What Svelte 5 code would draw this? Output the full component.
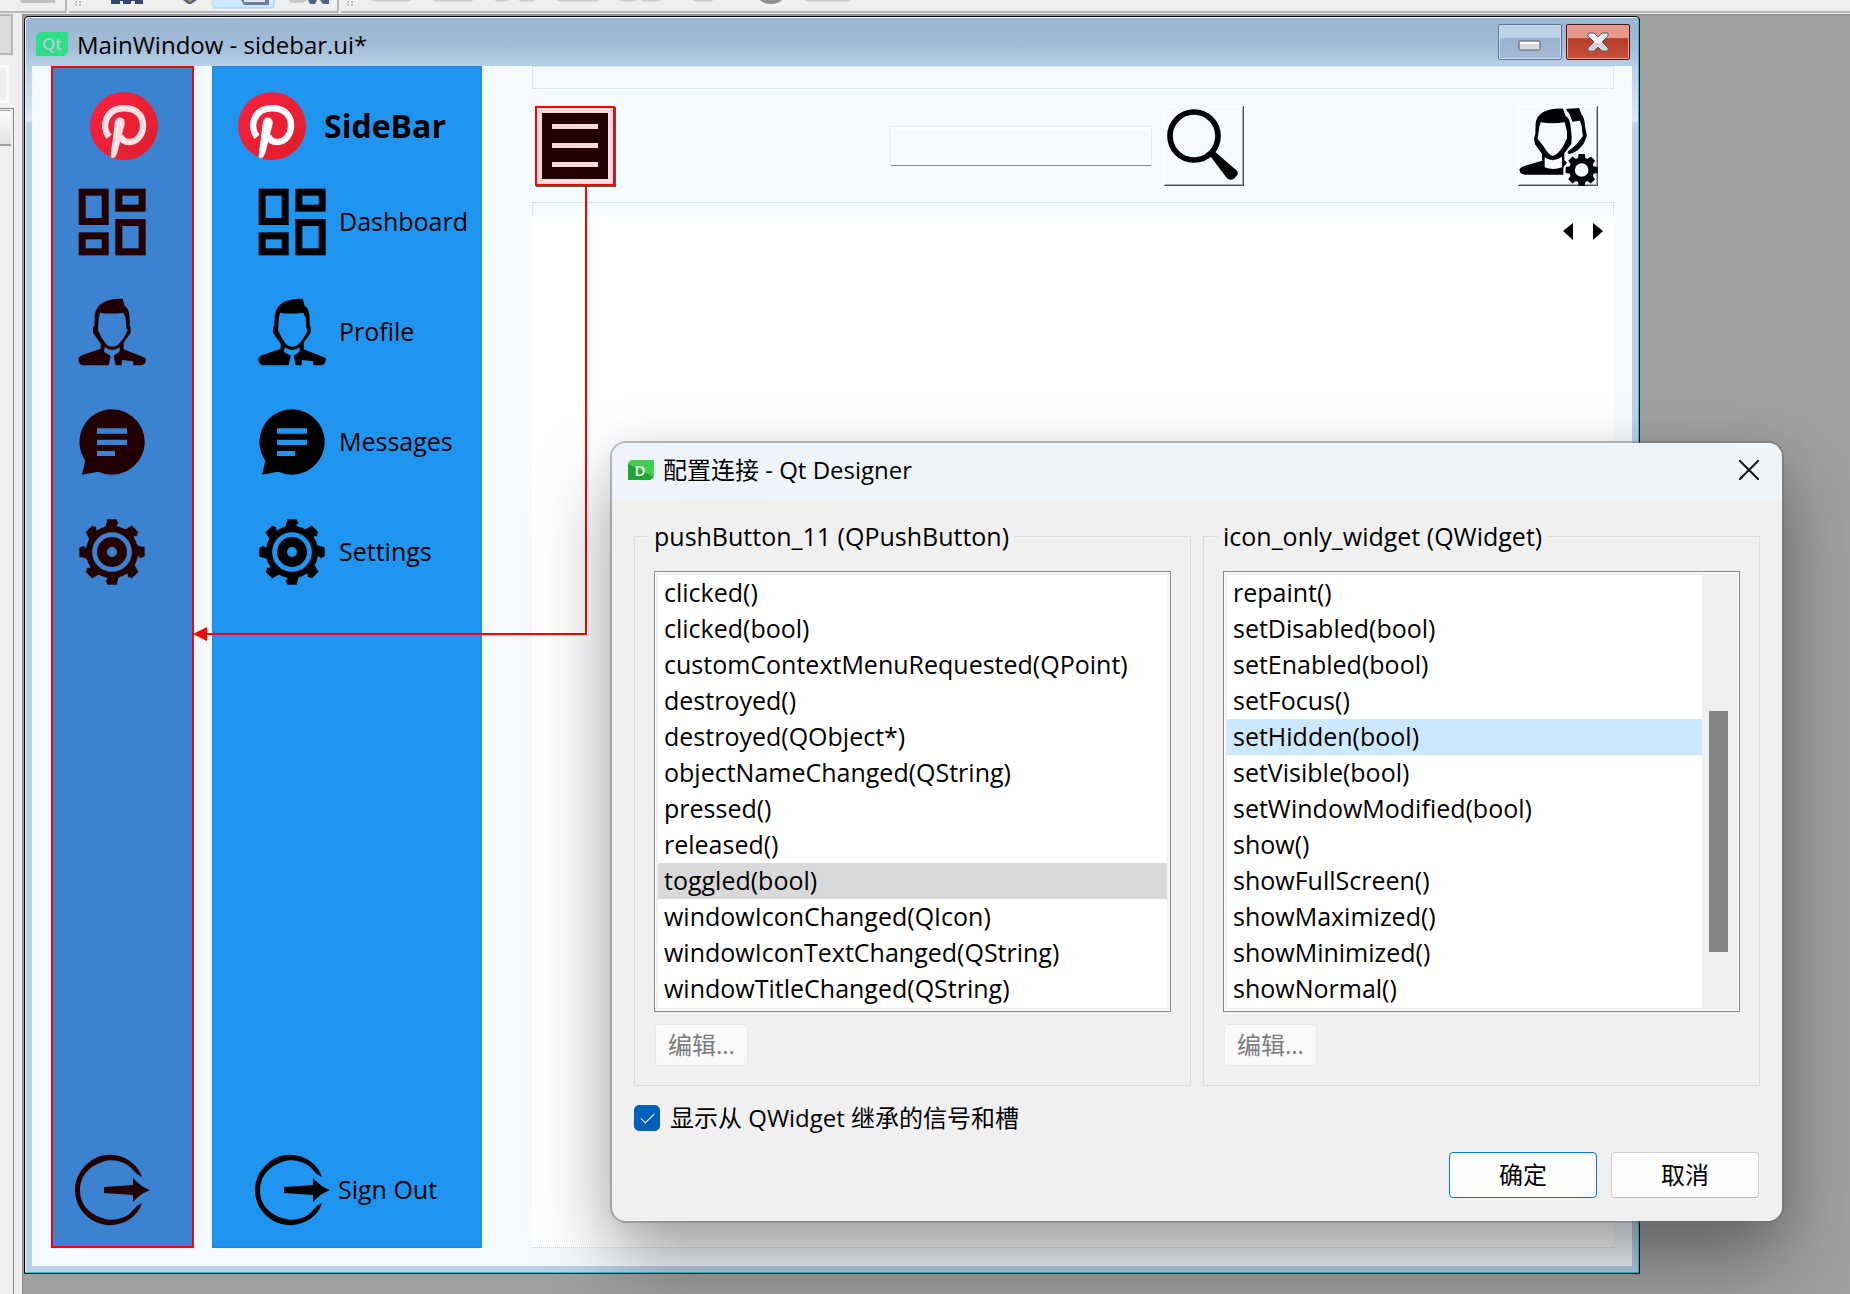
<script>
  const navItems = ['Dashboard', 'Profile', 'Messages', 'Settings'];
  const teeth = [0, 45, 90, 135, 180, 225, 270, 315];

  const signals = [
    'clicked()',
    'clicked(bool)',
    'customContextMenuRequested(QPoint)',
    'destroyed()',
    'destroyed(QObject*)',
    'objectNameChanged(QString)',
    'pressed()',
    'released()',
    'toggled(bool)',
    'windowIconChanged(QIcon)',
    'windowIconTextChanged(QString)',
    'windowTitleChanged(QString)'
  ];
  const slots = [
    'repaint()',
    'setDisabled(bool)',
    'setEnabled(bool)',
    'setFocus()',
    'setHidden(bool)',
    'setVisible(bool)',
    'setWindowModified(bool)',
    'show()',
    'showFullScreen()',
    'showMaximized()',
    'showMinimized()',
    'showNormal()'
  ];

  let signal = $state('toggled(bool)');
  let slot = $state('setHidden(bool)');
  let showInherited = $state(true);
  let query = $state('');
</script>

{#snippet pinterest(ink)}
  <svg class="brand-mark" viewBox="272 278 200 200" aria-hidden="true">
    <defs>
      <linearGradient id="brand-{ink}" x1="0" y1="0" x2="1" y2="1">
        <stop offset="0" stop-color="#fb2040" />
        <stop offset="1" stop-color="#dd1f2b" />
      </linearGradient>
    </defs>
    <circle cx="372" cy="378" r="100" fill="url(#brand-{ink})" />
    <g class={ink}>
      <path
        class="loop"
        d="M328 410C304 380 318 326 372 326C410 326 428 348 428 376C428 404 410 425 388 425C374 425 364 418 360 406"
      />
      <path class="stem" d="M345 368Q348 352 361 353Q376 355 374 372L352 458Q348 470 340 473L333 470Q332 450 338 425Z" />
    </g>
  </svg>
{/snippet}

{#snippet navIcon(name)}
  {#if name === 'Dashboard'}
    <svg class="nav-icon" viewBox="234 564 204 204" aria-hidden="true">
      <g fill="none" stroke="currentColor" stroke-width="21">
        <rect x="246.500" y="576.500" width="69" height="88" />
        <rect x="356.500" y="576.500" width="70" height="48" />
        <rect x="246.500" y="707.500" width="69" height="48" />
        <rect x="356.500" y="667.500" width="70" height="88" />
      </g>
    </svg>
  {:else if name === 'Profile'}
    <svg class="nav-icon" viewBox="0 -2 204 204" aria-hidden="true">
      <path
        fill="currentColor"
        fill-rule="evenodd"
        d="M132 0C82 0 52 16 50 55L49 80L45 88V102L68 135V150L20 167Q0 173 1 182Q2 200 17 200H92L98 171L78 160L80 146Q102 162 126 146L124 160L107 171L113 200H131L132 184L165 188L166 200H188Q206 198 203 178L137 152V132L158 102V86L155 80V60Q154 28 140 22L134 0ZM66 42Q100 47 136 42L143 58L145 88L149 95Q136 124 120 138Q102 150 86 138Q70 120 60 95L62 60Z"
      />
    </svg>
  {:else if name === 'Messages'}
    <svg class="nav-icon" viewBox="234 443 204 204" aria-hidden="true">
      <path
        fill="currentColor"
        fill-rule="evenodd"
        d="M336 447A98 98 0 1 1 295 634L246 643L256 601A98 98 0 0 1 336 447ZM291 504V520H381V504ZM291 538V554H381V538ZM291 572V587H345V572Z"
      />
    </svg>
  {:else}
    <svg class="nav-icon" viewBox="-102 -102 204 204" aria-hidden="true">
      <g fill="currentColor">
        {#each teeth as angle}
          <path transform="rotate({angle})" d="M-14 -98H13L19 -86L13 -80L16 -68H-24L-18 -82Z" />
        {/each}
      </g>
      <circle r="69" fill="none" stroke="currentColor" stroke-width="19" />
      <circle r="30" fill="none" stroke="currentColor" stroke-width="30" />
    </svg>
  {/if}
{/snippet}

{#snippet signOutIcon()}
  <svg class="exit-icon" viewBox="74 1154 76 72" aria-hidden="true">
    <path
      fill="currentColor"
      d="M142 1177Q137 1175 133 1170C126 1161 112 1158 102 1162C87 1167 80 1178 80 1190C80 1203 87 1213 102 1218C113 1222 126 1219 133 1210Q137 1205 142 1203Q139 1213 130 1219C118 1227 103 1227 92 1220C81 1213 75 1202 75 1190C75 1177 82 1167 92 1160C103 1153 118 1153 130 1161Q139 1168 142 1177Z"
    />
    <path fill="currentColor" d="M104 1187L133 1185V1178Q141 1187 150 1190Q141 1193 133 1202V1195L104 1193Z" />
  </svg>
{/snippet}

{#snippet memberList(title, items, current, pick, scroll)}
  <fieldset class="group">
    <legend>{title}</legend>
    <div class="list-frame">
      <ul role="listbox" aria-label={title}>
        {#each items as item}
          <li role="option" aria-selected={item === current} class:muted={!scroll}>
            <button type="button" onclick={() => pick(item)}>{item}</button>
          </li>
        {/each}
      </ul>
      {#if scroll}
        <div class="scrollbar"><div class="thumb"></div></div>
      {/if}
    </div>
    <button class="edit" type="button" disabled>编辑...</button>
  </fieldset>
{/snippet}

<div class="designer">
  <div class="toolbars">
    <div class="strip strip-file">
      <svg width="66" height="10" aria-hidden="true"><path d="M20 0H55V3H22Z" fill="#bdbdbd" /></svg>
    </div>
    <div class="strip strip-edit">
      <svg width="270" height="10" aria-hidden="true">
        <path d="M6 1h2v2h-2zM10 1h2v2h-2zM6 4h2v2h-2zM10 4h2v2h-2z" fill="#bcbcbc" />
        <path d="M42 0H74V4H66V1H62V4H54V1H51V4H42Z" fill="#32486f" />
        <path d="M114 0H128L122 4H119Z" fill="#56627c" />
        <path d="M119 0H123L121 2Z" fill="#d9a04a" />
        <path d="M144 -1V6Q144 8 146 8H203Q205 8 205 6V-1Z" fill="#cce8ff" stroke="#99d1ff" />
        <path d="M172 0H200V5H175Z" fill="#6d7d9c" />
        <path d="M175 0H196V2H175Z" fill="#dfe6ef" />
        <path d="M220 0H238L234 3H222Z" fill="#c6c6c6" />
        <path d="M239 0H248L246 4H241ZM251 0H260V4H254Z" fill="#4a6189" />
      </svg>
    </div>
    <div class="strip strip-layout">
      <svg width="520" height="10" aria-hidden="true">
        <path d="M6 1h2v2h-2zM10 1h2v2h-2zM6 4h2v2h-2zM10 4h2v2h-2z" fill="#bcbcbc" />
        <path
          d="M30 0H70L68 1H32ZM92 0H132L130 1H94ZM154 0H168L165 1H156ZM178 0H194L192 1H180ZM216 0H258L256 1H218ZM278 0H296L294 1H280ZM300 0H320L318 1H302ZM352 0H372L370 1H354ZM464 0H508V1H466Z"
          fill="#bdbdbd"
          stroke="#cfcfcf"
        />
        <path d="M419 0H441Q437 4 430 4T419 0Z" fill="#8f8f8f" />
      </svg>
    </div>
  </div>

  <div class="desk">
    <aside class="dock" aria-hidden="true">
      <div class="dock-button"></div>
      <div class="dock-field"></div>
      <div class="dock-tree"><div class="dock-head"></div></div>
    </aside>

    <main class="workspace">
      <section class="form-window">
        <header class="caption">
          <span class="qt">Qt</span>
          <h1>MainWindow - sidebar.ui*</h1>
          <button class="cap-button" type="button" aria-label="Minimize">
            <svg width="24" height="12" viewBox="0 0 24 12">
              <rect x="1" y="1" width="21" height="9" rx="1" fill="#dcdcdc" stroke="#555a6e" />
              <path d="M2 2H21V4H2Z" fill="#fff" />
            </svg>
          </button>
          <button class="cap-button cap-close" type="button" aria-label="Close form">
            <svg width="24" height="20" viewBox="0 0 24 20">
              <path
                d="M2 1H8L12 5L16 1H22V4L16 10L22 16V19H16L12 15L8 19H2V16L8 10L2 4Z"
                fill="#f2f2f2"
                stroke="#565368"
                stroke-linejoin="round"
              />
              <path d="M8 11L3 16V18H8L12 14L16 18H21V16L16 11Z" fill="#d5d5d5" />
            </svg>
          </button>
        </header>

        <div class="canvas">
          <nav class="rail" aria-label="Icons">
            <div class="rail-brand">{@render pinterest('tinted')}</div>
            {#each navItems as name}
              <button class="nav-button" type="button" aria-label={name}>{@render navIcon(name)}</button>
            {/each}
            <button class="nav-button exit" type="button" aria-label="Sign Out">{@render signOutIcon()}</button>
          </nav>

          <nav class="sidebar" aria-label="Sidebar">
            <div class="brand">{@render pinterest('plain')}<strong>SideBar</strong></div>
            {#each navItems as name}
              <button class="nav-button" type="button">{@render navIcon(name)}<span>{name}</span></button>
            {/each}
            <button class="nav-button exit" type="button">{@render signOutIcon()}<span>Sign Out</span></button>
          </nav>

          <div class="page">
            <div class="menu-slot"></div>
            <div class="tools">
              <button class="burger" type="button" aria-label="Toggle sidebar">
                <svg width="66" height="66" viewBox="0 0 66 66">
                  <path
                    fill="#220001"
                    fill-rule="evenodd"
                    d="M0 0H66V66H0ZM10 11V16H56V11ZM10 30V35H56V30ZM10 49V54H56V49Z"
                  />
                </svg>
              </button>
              <div class="search">
                <input type="text" aria-label="Search" bind:value={query} />
                <button class="raised" type="button" aria-label="Search">
                  <svg width="80" height="80" viewBox="42 288 240 240">
                    <circle cx="132" cy="378" r="72" fill="none" stroke="#000" stroke-width="17" />
                    <path d="M179 436L195 425L258 480Q266 487 262 495L252 506Q240 513 231 505Z" />
                  </svg>
                </button>
              </div>
              <button class="raised" type="button" aria-label="Account">
                <svg width="80" height="80" viewBox="1104 288 240 240">
                  <path
                    fill-rule="evenodd"
                    d="M1239 296C1190 294 1160 310 1157 340L1156 372L1152 385L1155 403L1176 432V452L1130 466Q1108 472 1108 480L1112 490Q1118 494 1130 494H1240V472L1251 458L1243 450V430L1264 402L1265 380L1262 350Q1260 325 1247 318ZM1172 337Q1205 343 1244 337L1251 365V385L1240 408Q1222 436 1208 438Q1195 434 1180 408L1163 386L1168 350ZM1184 442V472Q1210 482 1236 472V440Q1208 460 1184 442Z"
                  />
                  <path
                    d="M1250 298L1287 296L1292 312Q1302 320 1303 345L1309 378L1300 400Q1285 425 1256 431L1254 426Q1285 405 1300 378L1296 345L1290 330L1268 334Q1262 310 1250 298Z"
                    stroke="#000"
                    stroke-width="3"
                  />
                  <g transform="translate(1295 480)">
                    {#each teeth as angle}
                      <path transform="rotate({angle})" d="M-9 -48H9L12 -30H-12Z" />
                    {/each}
                    <circle r="29" fill="none" stroke="#000" stroke-width="17" />
                  </g>
                </svg>
              </button>
            </div>
            <div class="stack-head"></div>
            <div class="stack">
              <button class="step" type="button" aria-label="Previous page">
                <svg width="10" height="17" viewBox="0 0 10 17"><path d="M10 0V17L0 8Z" /></svg>
              </button>
              <button class="step" type="button" aria-label="Next page">
                <svg width="10" height="17" viewBox="0 0 10 17"><path d="M0 0V17L10 8Z" /></svg>
              </button>
            </div>
          </div>

          <svg class="connection" width="396" height="456" viewBox="0 0 396 456" aria-hidden="true">
            <path d="M393 0V448H10" fill="none" stroke="#f00" stroke-width="2" />
            <path d="M0 448L14 441V455Z" fill="#f00" />
          </svg>
        </div>
      </section>
    </main>
  </div>

  <div class="dialog" role="dialog" aria-labelledby="dialog-title">
    <header class="dialog-bar">
      <svg width="26" height="20" viewBox="0 0 26 20" aria-hidden="true">
        <path d="M3 0H26V16L22 20H0V3Z" fill="#41cd52" />
        <path d="M0 4L26 17L22 20H0Z" fill="#21a633" />
        <text x="12" y="16" text-anchor="middle">D</text>
      </svg>
      <h2 id="dialog-title">配置连接 - Qt Designer</h2>
      <button type="button" aria-label="Close">
        <svg width="20" height="20" viewBox="0 0 20 20">
          <path d="M0 0L20 20M20 0L0 20" stroke="#111" stroke-width="2" />
        </svg>
      </button>
    </header>
    <div class="dialog-body">
      <div class="groups">
        {@render memberList('pushButton_11 (QPushButton)', signals, signal, (v) => (signal = v), false)}
        {@render memberList('icon_only_widget (QWidget)', slots, slot, (v) => (slot = v), true)}
      </div>
      <label class="inherit">
        <input type="checkbox" bind:checked={showInherited} />
        <span>显示从 QWidget 继承的信号和槽</span>
      </label>
      <div class="actions">
        <button class="primary" type="button">确定</button>
        <button type="button">取消</button>
      </div>
    </div>
  </div>
</div>

<style>
  :global(body) {
    margin: 0;
    background: #a0a0a0;
  }
  .designer,
  .designer * {
    box-sizing: border-box;
  }
  .designer {
    position: relative;
    display: flex;
    flex-direction: column;
    min-height: 100vh;
    overflow: hidden;
    font-family: 'Open Sans', 'Noto Sans CJK SC', sans-serif;
    font-size: 24px;
    line-height: 36px;
    color: #000;
    background: #efefef;
  }
  button {
    margin: 0;
    padding: 0;
    border: 0;
    background: none;
    color: inherit;
    font: inherit;
  }
  svg {
    display: block;
    flex: none;
  }
  h1,
  h2 {
    margin: 0;
    flex: 1;
    font-size: 24px;
    font-weight: 400;
  }

  /* Designer tool bars and dock */
  .toolbars {
    display: flex;
    gap: 2px;
    height: 13px;
  }
  .strip {
    border-bottom: 2px solid #b6b6b6;
    border-right: 2px solid #b6b6b6;
  }
  .strip-file {
    width: 67px;
  }
  .strip-edit {
    width: 270px;
  }
  .strip-layout {
    flex: 1;
    border-right: 0;
  }
  .desk {
    flex: 1;
    display: flex;
    padding-top: 1px;
  }
  .dock {
    width: 22px;
    display: flex;
    flex-direction: column;
  }
  .dock-button {
    width: 13px;
    height: 41px;
    background: #dcdcdc;
    border: solid #b6b6b6;
    border-width: 2px 2px 2px 0;
  }
  .dock-field {
    width: 9px;
    height: 38px;
    margin: 10px 0 5px;
    border: solid #fafafa;
    border-width: 3px 3px 3px 0;
  }
  .dock-tree {
    width: 14px;
    flex: 1;
    border: solid #828790;
    border-width: 1px 1px 0 0;
  }
  .dock-head {
    width: 11px;
    height: 36px;
    margin-top: 1px;
    border-top: 1px solid #a0a0a0;
    border-bottom: 2px solid #a0a0a0;
    background: linear-gradient(#fdfdfd, #e2e2e2);
  }
  .workspace {
    flex: 1;
    display: flex;
    align-items: stretch;
    padding: 1px 210px 20px 1px;
    border: solid #828790;
    border-width: 1px 0 0 1px;
    background: #a0a0a0;
  }

  /* Form window */
  .form-window {
    flex: 1;
    display: flex;
    flex-direction: column;
    padding: 0 7px 7px;
    border: 1px solid #000;
    border-radius: 4px 4px 0 0;
    box-shadow: inset -1px -1px 0 #22c6dc, inset 1px 1px 0 #eef4fb;
    background: linear-gradient(#9ab4d1 0, #a3bcd8 30px, #b9d1ea 50px, #dce8f5 104px, #b9d1ea 106px);
  }
  .caption {
    display: flex;
    align-items: center;
    height: 49px;
    padding: 0 2px 0 4px;
  }
  .caption h1 {
    margin: 7px 0 0 9px;
  }
  .qt {
    width: 32px;
    height: 24px;
    margin-top: 5px;
    clip-path: polygon(4px 0, 100% 0, 100% 20px, 28px 100%, 0 100%, 0 4px);
    background: #2cde85;
    color: #a9cfd2;
    font-size: 17px;
    font-weight: 600;
    line-height: 24px;
    text-align: center;
  }
  .cap-button {
    display: grid;
    place-items: center;
    width: 64px;
    height: 36px;
    padding-top: 8px;
    border: 1px solid #5f7594;
    border-radius: 2px;
    box-shadow: inset 0 0 0 1px #c9daec;
    background: linear-gradient(#bdd1e8 38%, #98b1cf 40%, #a3bbd8);
  }
  .cap-close {
    margin-left: 4px;
    padding: 0;
    border-color: #4b0f1c;
    box-shadow: inset 0 0 0 1px #e6a79c;
    background: linear-gradient(#e4998b 38%, #b53c26 40%, #c9503b);
  }
  .canvas {
    position: relative;
    flex: 1;
    display: flex;
    padding: 0 18px 18px 19px;
    background: #f5faff;
  }
  .rail,
  .sidebar {
    display: flex;
    flex-direction: column;
  }
  .rail {
    width: 143px;
    margin-right: 18px;
    padding-bottom: 19px;
    outline: 2px solid #f00;
    outline-offset: -2px;
    background: #3b82d0;
    color: #220001;
  }
  .rail-brand {
    padding: 26px 0 7px 39px;
  }
  .sidebar {
    width: 270px;
    margin-right: 50px;
    padding-bottom: 19px;
    outline: 1px dotted #1c80d0;
    outline-offset: -1px;
    background: #2095f0;
  }
  .brand {
    display: flex;
    align-items: center;
    gap: 18px;
    padding: 26px 0 7px 26px;
  }
  .brand strong {
    font-size: 32px;
    line-height: 60px;
  }
  .brand-mark {
    width: 68px;
    height: 68px;
  }
  .loop {
    fill: none;
    stroke-width: 19;
  }
  .tinted {
    fill: #ffdfe1;
    stroke: #ffdfe1;
  }
  .plain {
    fill: #fff;
    stroke: #fff;
  }
  .stem {
    stroke: none;
  }
  .nav-button {
    display: flex;
    align-items: center;
    height: 110px;
    padding-left: 27px;
    font-size: 25px;
    text-align: left;
  }
  .nav-button span {
    padding-bottom: 2px;
  }
  .sidebar .nav-button {
    gap: 13px;
    padding-left: 46px;
  }
  .nav-icon {
    width: 68px;
    height: 68px;
  }
  .exit-icon {
    width: 76px;
    height: 72px;
  }
  .nav-button.exit {
    height: 78px;
    margin-top: auto;
    padding-left: 23px;
  }
  .sidebar .nav-button.exit {
    gap: 8px;
    padding-left: 42px;
  }

  .page {
    flex: 1;
    min-width: 0;
    display: flex;
    flex-direction: column;
  }
  .menu-slot {
    height: 23px;
    border: 1px dotted #c9d3dc;
  }
  .tools {
    display: flex;
    align-items: center;
    justify-content: space-between;
    height: 113px;
    padding: 0 16px 0 3px;
  }
  .burger {
    display: grid;
    place-items: center;
    width: 80px;
    height: 80px;
    border: 2px solid #f00;
    box-shadow: 1px 1px 0 #555;
    background: #f6dadd;
  }
  .search {
    display: flex;
    align-items: center;
    gap: 12px;
  }
  .search input {
    width: 262px;
    height: 40px;
    padding: 0 8px;
    border: 1px solid #e8ecef;
    border-bottom-color: #868a8e;
    border-radius: 2px;
    outline: 0;
    box-shadow: inset 0 0 0 3px #fff;
    background: #f5faff;
    font: inherit;
  }
  .raised {
    width: 80px;
    height: 80px;
    box-shadow: inset -1px -1px 0 #555, inset 1px 1px 0 #fff, inset -2px -2px 0 #a9adb1;
  }
  .stack-head {
    height: 14px;
    border: dotted #c9d3dc;
    border-width: 1px 1px 0;
  }
  .stack {
    flex: 1;
    display: flex;
    align-items: flex-start;
    justify-content: flex-end;
    gap: 20px;
    padding: 7px 11px 0 0;
    border-bottom: 1px dotted #c9d3dc;
    background: #fff;
  }
  .connection {
    position: absolute;
    left: 161px;
    top: 120px;
  }

  /* Connection dialog */
  .dialog {
    position: absolute;
    left: 612px;
    right: 68px;
    top: 443px;
    border-radius: 14px;
    overflow: hidden;
    background: #f0f0f0;
    box-shadow: 0 0 0 2px rgba(110, 110, 110, 0.45), 0 4px 40px rgba(0, 0, 0, 0.08), 0 40px 80px rgba(0, 0, 0, 0.36);
  }
  .dialog-bar {
    display: flex;
    align-items: center;
    gap: 9px;
    height: 56px;
    padding: 0 23px 2px 16px;
    background: linear-gradient(90deg, #eff3fb, #eef4f8 20%);
  }
  .dialog-bar text {
    fill: #fff;
    font-size: 15px;
    font-weight: 600;
  }
  .dialog-body {
    display: flex;
    flex-direction: column;
    padding: 19px 22px 23px;
  }
  .groups {
    display: grid;
    grid-template-columns: 1fr 1fr;
    gap: 12px;
  }
  .group {
    min-width: 0;
    margin: 0;
    padding: 17px 19px;
    border: 1px solid #dcdcdc;
  }
  .group legend {
    margin-left: -5px;
    padding: 0 5px;
    font-size: 25px;
  }
  .list-frame {
    display: flex;
    padding: 3px;
    border: 1px solid #828790;
    background: #fff;
    box-shadow: inset 0 0 0 1px #fff, inset 0 0 0 3px #f0f0f0;
  }
  ul {
    flex: 1;
    margin: 0;
    padding: 0 0 1px;
    list-style: none;
  }
  li button {
    display: block;
    width: 100%;
    padding: 0 6px 2px;
    font-size: 25px;
    line-height: 34px;
    text-align: left;
    white-space: nowrap;
  }
  li[aria-selected='true'] {
    background: #cce8ff;
  }
  li.muted[aria-selected='true'] {
    background: #d9d9d9;
  }
  .scrollbar {
    width: 34px;
    padding: 136px 8px 56px 7px;
    background: #f0f0f0;
  }
  .thumb {
    height: 100%;
    background: #858585;
  }
  .edit {
    display: block;
    height: 42px;
    margin: 12px 0 2px 1px;
    padding: 0 12px;
    border: 1px solid #e7e7e7;
    border-radius: 4px;
    background: #f9f9f9;
    color: #7c7c7c;
  }
  .inherit {
    display: flex;
    align-items: center;
    gap: 10px;
    margin-top: 14px;
    align-self: flex-start;
  }
  .inherit input {
    appearance: none;
    display: grid;
    place-items: center;
    width: 26px;
    height: 26px;
    margin: 0;
    border: 1px solid #005fb8;
    border-radius: 5px;
    background: #fff;
  }
  .inherit input:checked {
    background: #005fb8;
  }
  .inherit input:checked::after {
    content: '';
    width: 12px;
    height: 6px;
    margin-bottom: 4px;
    border: solid #fff;
    border-width: 0 0 1px 1px;
    transform: rotate(-45deg);
  }
  .actions {
    display: flex;
    justify-content: flex-end;
    gap: 14px;
    margin-top: 16px;
    padding-right: 1px;
  }
  .actions button {
    width: 148px;
    height: 46px;
    border: 1px solid #d0d0d0;
    border-bottom-color: #b9b9b9;
    border-radius: 4px;
    background: #fdfdfd;
  }
  .actions .primary {
    border-color: #0078d4;
  }
</style>
